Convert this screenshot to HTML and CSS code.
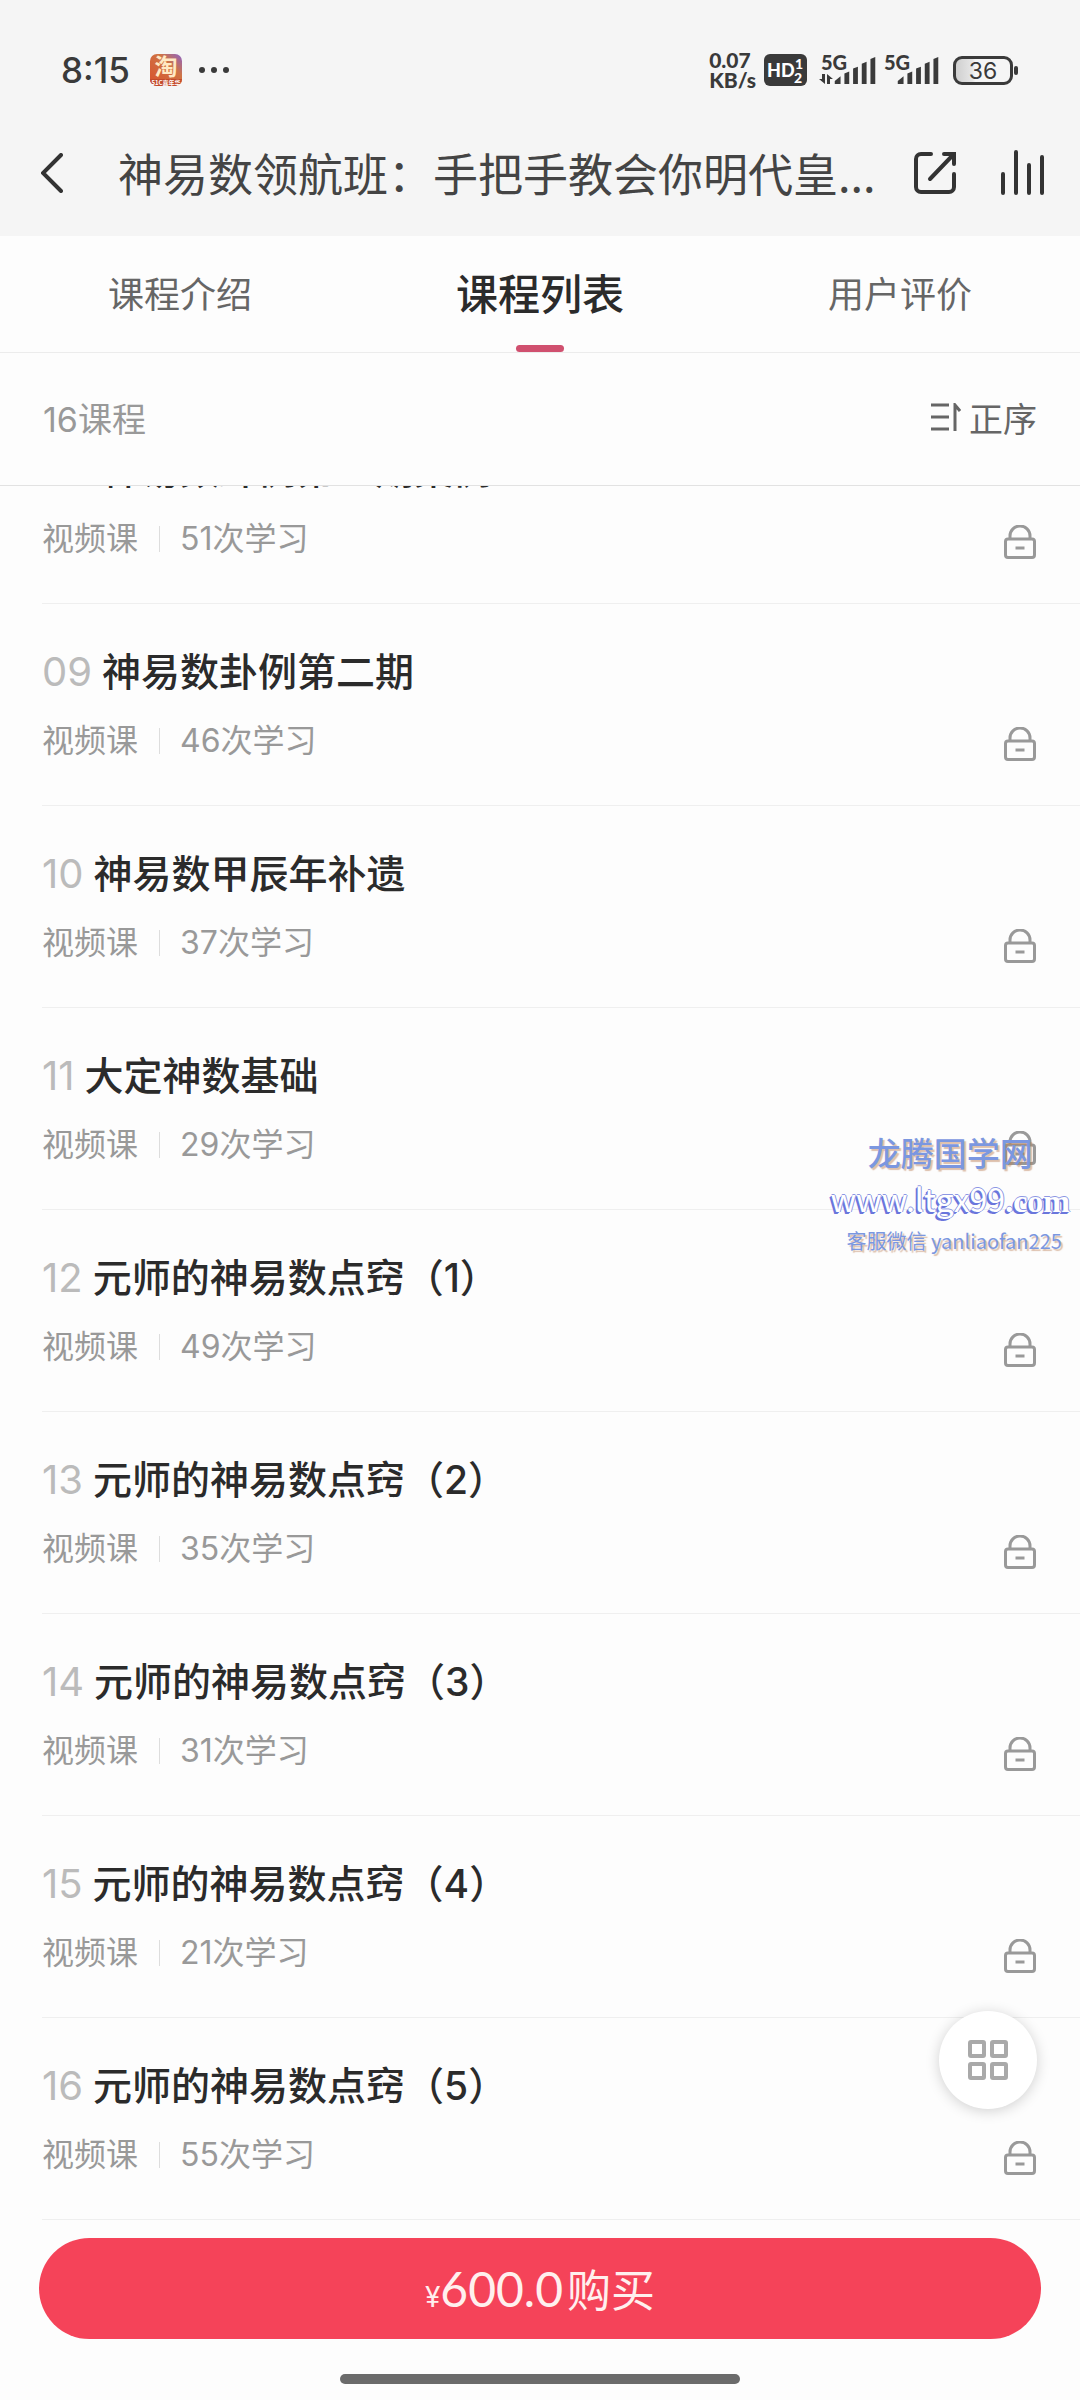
FILE: index.html
```html
<!DOCTYPE html>
<html lang="zh-CN">
<head>
    <meta charset="UTF-8">
    <meta name="viewport" content="width=device-width, initial-scale=1.0">
    <title>课程列表</title>
    <link rel="stylesheet" href="styles.css">
</head>
<body>
    <!-- 图标 -->
    <svg class="symbols" aria-hidden="true">
        <symbol id="icon-lock" viewBox="0 0 32 34">
            <path d="M6 14V11a10 10 0 0 1 20 0V14" />
            <rect x="1.5" y="14" width="29" height="18.5" rx="2.5" />
            <path d="M11.5 23H20.5" />
        </symbol>
        <symbol id="icon-signal" viewBox="0 0 43 28">
            <path d="M0 28v-3l6-5v8zM10 28V17l5-2v13zM19 28V12l5-2v18zM28 28V7l5-2v23zM37 28V2l5-2v28z" />
        </symbol>
    </svg>

    <div class="screen">
        <header class="top">
            <div class="status">
                <span class="time">8:15</span>
                <svg class="app-icon" viewBox="0 0 32 32">
                    <defs>
                        <linearGradient id="tao" x1="0" y1="1" x2="1" y2="0">
                            <stop offset="0" stop-color="#d9512c" />
                            <stop offset="0.65" stop-color="#cf7445" />
                            <stop offset="1" stop-color="#8b62c8" />
                        </linearGradient>
                    </defs>
                    <rect width="32" height="32" rx="7" fill="url(#tao)" />
                    <path d="M0 25H32a7 7 0 0 1-7 7H7a7 7 0 0 1-7-7z" fill="#c34a2a" />
                    <text x="16" y="21" font-size="23" font-weight="700" text-anchor="middle" fill="#ffe9c4">淘</text>
                    <text x="16" y="31" font-size="6" font-weight="700" text-anchor="middle" fill="#fff">51C嘉年华</text>
                </svg>
                <svg class="dots" viewBox="0 0 32 8">
                    <circle cx="4" cy="4" r="3" /><circle cx="16" cy="4" r="3" /><circle cx="28" cy="4" r="3" />
                </svg>
                <div class="status-right">
                    <div class="speed"><span>0.07</span><span>KB/s</span></div>
                    <svg class="hd" viewBox="0 0 43 32">
                        <rect width="43" height="32" rx="6" fill="#3a3a3a" />
                        <text x="3" y="23" font-size="18">HD</text>
                        <text x="31" y="15" font-size="14">1</text>
                        <text x="30" y="29" font-size="14">2</text>
                    </svg>
                    <div class="signal">
                        <span>5G</span>
                        <svg class="updown" viewBox="0 0 14 10"><path d="M3 0h3v10L0 5h3zM8 0l6 5h-3v5H8z" /></svg>
                        <svg class="bars"><use href="#icon-signal" /></svg>
                    </div>
                    <div class="signal">
                        <span>5G</span>
                        <svg class="bars"><use href="#icon-signal" /></svg>
                    </div>
                    <div class="battery"><span>36</span></div>
                </div>
            </div>
            <div class="nav">
                <button class="icon-btn back" aria-label="返回">
                    <svg width="22" height="40" viewBox="0 0 22 40"><path d="M20 2L2 20L20 38" /></svg>
                </button>
                <h1>神易数领航班：手把手教会你明代皇...</h1>
                <button class="icon-btn share" aria-label="分享">
                    <svg width="42" height="42" viewBox="0 0 42 42">
                        <path d="M17 2H7a5 5 0 0 0-5 5V35a5 5 0 0 0 5 5H35a5 5 0 0 0 5-5V22" />
                        <path d="M16 27L38 4M30 2H40V12" />
                    </svg>
                </button>
                <button class="icon-btn" aria-label="播放">
                    <svg width="44" height="46" viewBox="0 0 44 46">
                        <path d="M2 24V43M15 2V43M28 15V43M41 7V43" />
                    </svg>
                </button>
            </div>
        </header>

        <nav class="tabs">
            <a href="#intro">课程介绍</a>
            <a href="#list" class="active">课程列表</a>
            <a href="#comment">用户评价</a>
        </nav>

        <div class="count-bar">
            <span>16课程</span>
            <button class="sort-btn">
                <svg width="30" height="28" viewBox="0 0 30 28"><path d="M0 2H18M0 14H18M0 26H18M24 28V2L29 8" /></svg>
                正序
            </button>
        </div>

        <!-- 课程列表 -->
        <main class="list-box">
            <ul id="course-list"></ul>
        </main>

        <footer class="bottom">
            <button class="buy-btn"><small>¥</small><b>600.0</b>购买</button>
            <div class="home-line"></div>
        </footer>

        <button class="float-btn" aria-label="更多">
            <svg width="42" height="42" viewBox="0 0 42 42">
                <rect x="3" y="3" width="14" height="14" rx="1" /><rect x="25" y="3" width="14" height="14" rx="1" />
                <rect x="3" y="25" width="14" height="14" rx="1" /><rect x="25" y="25" width="14" height="14" rx="1" />
            </svg>
        </button>

        <div class="watermark">
            <p class="wm-name">龙腾国学网</p>
            <p class="wm-url">www.ltgx99<b>.com</b></p>
            <p class="wm-wx">客服微信 yanliaofan225</p>
        </div>
    </div>

    <script>
        const courses = [
            { no: '08', name: '神易数卦例第一期案例', count: 51 },
            { no: '09', name: '神易数卦例第二期', count: 46 },
            { no: '10', name: '神易数甲辰年补遗', count: 37 },
            { no: '11', name: '大定神数基础', count: 29 },
            { no: '12', name: '元师的神易数点窍（1）', count: 49 },
            { no: '13', name: '元师的神易数点窍（2）', count: 35 },
            { no: '14', name: '元师的神易数点窍（3）', count: 31 },
            { no: '15', name: '元师的神易数点窍（4）', count: 21 },
            { no: '16', name: '元师的神易数点窍（5）', count: 55 }
        ];

        // 生成课程列表
        document.getElementById('course-list').innerHTML = courses.map(c => `
            <li class="course">
                <h2><span class="no">${c.no}</span>${c.name}</h2>
                <div class="meta">
                    <span>视频课</span>
                    <span class="learn">${c.count}次学习</span>
                    <svg class="lock"><use href="#icon-lock" /></svg>
                </div>
            </li>`).join('');
    </script>
</body>
</html>
```
FILE: styles.css
```css
* {
    box-sizing: border-box;
}

body {
    margin: 0;
    font-family: Inter, "Noto Sans CJK SC", sans-serif;
    background-color: #fdfdfd;
    color: #2b2b2b;
}

h1, h2, p, ul {
    margin: 0;
    padding: 0;
    font-weight: 400;
}

button {
    border: none;
    padding: 0;
    background: none;
    font-family: inherit;
    color: inherit;
    cursor: pointer;
}

svg {
    display: block;
    fill: none;
}

.symbols {
    position: absolute;
    width: 0;
    height: 0;
}

.screen {
    position: relative;
    display: flex;
    flex-direction: column;
    height: 100vh;
    overflow: hidden;
}

/* 顶部 */
.top {
    background-color: #f5f5f5;
}

.status {
    display: flex;
    align-items: center;
    height: 110px;
    padding: 30px 61px 0 61px;
    color: #3a3a3a;
}

.time {
    font-size: 35px;
    font-weight: 500;
    line-height: 40px;
}

.app-icon {
    width: 32px;
    height: 32px;
    margin-left: 20px;
    font-family: "Noto Sans CJK SC", sans-serif;
}

.dots {
    width: 32px;
    height: 8px;
    margin-left: 16px;
    fill: #3a3a3a;
}

.status-right {
    display: flex;
    align-items: center;
    margin-left: auto;
}

.speed {
    display: flex;
    flex-direction: column;
    margin-right: 8px;
    font-family: Lato, sans-serif;
    font-size: 21px;
    font-weight: 900;
    line-height: 20px;
}

.hd {
    width: 43px;
    height: 32px;
    margin-right: 12px;
    font-family: Lato, sans-serif;
    font-weight: 900;
}

.hd text {
    fill: #fff;
}

.signal {
    position: relative;
    width: 58px;
    height: 32px;
    margin-right: 5px;
    font-family: Lato, sans-serif;
    font-size: 20px;
    font-weight: 900;
    line-height: 16px;
}

.signal span {
    display: block;
    margin-left: 2px;
}

.bars {
    position: absolute;
    right: 0;
    bottom: 2px;
    width: 43px;
    height: 27px;
    fill: #3a3a3a;
}

.updown {
    width: 14px;
    height: 10px;
    margin-top: 4px;
    fill: #3a3a3a;
}

.battery {
    position: relative;
    width: 60px;
    height: 29px;
    margin: 0 6px 0 8px;
    border: 3px solid #3a3a3a;
    border-radius: 9px;
    background: linear-gradient(to right, #cfcfcf, #e6e6e6 30%, #f5f5f5 36%);
    font-size: 23px;
    line-height: 24px;
    text-align: center;
}

.battery::after {
    content: "";
    position: absolute;
    right: -8px;
    top: 7px;
    width: 4px;
    height: 9px;
    border-radius: 2px;
    background-color: #3a3a3a;
}

.nav {
    display: flex;
    align-items: center;
    height: 126px;
    padding: 0 35px 0 41px;
}

.nav h1 {
    flex: 1;
    overflow: hidden;
    font-family: "Noto Sans CJK SC", sans-serif;
    font-size: 45px;
    line-height: 68px;
    white-space: nowrap;
    color: #444;
}

.icon-btn svg {
    stroke: #333;
    stroke-width: 4;
    stroke-linecap: round;
}

.back {
    margin-right: 55px;
}

.share {
    margin-right: 45px;
}

/* 标签 */
.tabs {
    display: flex;
    height: 117px;
    border-bottom: 1px solid #ececec;
}

.tabs a {
    position: relative;
    flex: 1;
    font-size: 36px;
    line-height: 118px;
    text-align: center;
    text-decoration: none;
    color: #666;
}

.tabs .active {
    font-size: 42px;
    font-weight: 500;
    color: #2b2b2b;
}

.tabs .active::after {
    content: "";
    position: absolute;
    left: 50%;
    bottom: 0;
    width: 48px;
    height: 7px;
    margin-left: -24px;
    border-radius: 4px;
    background-color: #d0506f;
}

.count-bar {
    display: flex;
    align-items: center;
    justify-content: space-between;
    height: 133px;
    padding: 0 43px 4px;
    border-bottom: 1px solid #e2e2e2;
    font-size: 34px;
    color: #999;
}

.sort-btn {
    display: flex;
    align-items: center;
    gap: 8px;
    font-size: 34px;
    color: #666;
}

.sort-btn svg {
    stroke: #666;
    stroke-width: 3;
}

/* 列表停在底部，最上面一行被遮住一部分 */
.list-box {
    display: flex;
    flex: 1;
    flex-direction: column;
    justify-content: flex-end;
    min-height: 0;
    overflow: hidden;
}

.list-box ul {
    list-style: none;
}

.course {
    height: 202px;
    margin-left: 42px;
    padding: 44px 44px 0 0;
    border-bottom: 1px solid #efefef;
}

.course h2 {
    font-size: 39px;
    font-weight: 500;
    line-height: 48px;
}

.no {
    margin-right: 10px;
    font-size: 40px;
    font-weight: 400;
    color: #bbb;
}

.meta {
    display: flex;
    align-items: center;
    margin-top: 25px;
    font-size: 32px;
    line-height: 40px;
    color: #999;
}

.learn {
    display: flex;
    align-items: center;
}

.learn::before {
    content: "";
    width: 1px;
    height: 26px;
    margin: 0 20px 0 21px;
    background-color: #ddd;
}

.lock {
    width: 32px;
    height: 34px;
    margin: 6px 0 0 auto;
    stroke: #999;
    stroke-width: 3;
}

/* 底部购买 */
.bottom {
    height: 180px;
    padding: 18px 39px 0;
}

.buy-btn {
    display: flex;
    align-items: baseline;
    justify-content: center;
    width: 100%;
    height: 101px;
    border-radius: 51px;
    background-color: #f54359;
    color: #fff0ee;
    font-size: 44px;
    line-height: 101px;
}

.buy-btn small {
    font-size: 28px;
}

.buy-btn b {
    margin-right: 4px;
    font-family: Lato, sans-serif;
    font-size: 48px;
    font-weight: 400;
}

.home-line {
    width: 40%;
    height: 10px;
    margin: 35px auto 0;
    border-radius: 5px;
    background-color: #6b6b6b;
}

.float-btn {
    position: absolute;
    right: 43px;
    bottom: 291px;
    display: flex;
    align-items: center;
    justify-content: center;
    width: 98px;
    height: 98px;
    border-radius: 50%;
    background-color: #fff;
    box-shadow: 0 2px 14px rgba(0,0,0,0.18);
}

.float-btn svg {
    stroke: #a9a9a9;
    stroke-width: 4;
}

/* 水印 */
.watermark {
    position: absolute;
    right: 10px;
    top: 1128px;
    text-align: center;
    white-space: nowrap;
    color: #7b97e0;
    font-family: "Noto Sans CJK SC", sans-serif;
    text-shadow: 2px 2px 1px rgba(190,130,90,0.5);
}

.wm-name {
    font-size: 33px;
    font-weight: 500;
    line-height: 48px;
}

.wm-url {
    font-size: 32px;
    line-height: 44px;
    color: #fff;
    text-shadow: 0 -1px 0 #8d97e4, 1px 0 0 #8d97e4, -1px 1px 0 #6a76dc, -2px 2px 0 #6a76dc;
}

.wm-url b {
    font-family: "Liberation Serif", serif;
}

.wm-wx {
    padding-left: 8px;
    font-size: 20px;
    line-height: 36px;
}
```
